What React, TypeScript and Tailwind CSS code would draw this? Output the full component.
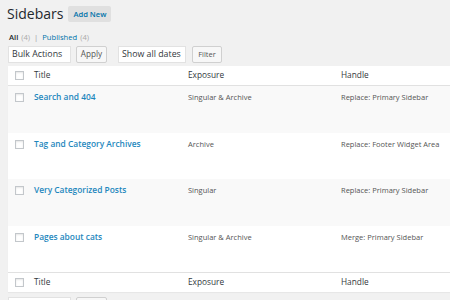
const rows = [
  { title: "Search and 404", exposure: "Singular & Archive", handle: "Replace: Primary Sidebar", h: "h-[47px]", bg: "bg-[#f9f9f9]" },
  { title: "Tag and Category Archives", exposure: "Archive", handle: "Replace: Footer Widget Area", h: "h-[46px]", bg: "bg-white" },
  { title: "Very Categorized Posts", exposure: "Singular", handle: "Replace: Primary Sidebar", h: "h-[47px]", bg: "bg-[#f9f9f9]" },
  { title: "Pages about cats", exposure: "Singular & Archive", handle: "Merge: Primary Sidebar", h: "h-[46px]", bg: "bg-white" },
];

function Checkbox() {
  return (
    <span className="block size-[9px] border border-[#c3c7cb] bg-white shadow-[inset_0_1px_2px_rgba(0,0,0,0.1)]" />
  );
}

function HeadRow({ border }: { border: string }) {
  return (
    <div className={`flex h-[20px] items-center bg-white ${border} border-[#e1e1e1] text-[8.3px] text-[#32373c]`}>
      <div className="w-[26px] pl-[7px]">
        <Checkbox />
      </div>
      <div className="w-[154px]">Title</div>
      <div className="w-[153px]">Exposure</div>
      <div>Handle</div>
    </div>
  );
}

export default function App() {
  return (
    <div className="h-[300px] w-[450px] overflow-hidden whitespace-nowrap bg-[#f1f1f1] font-['Open_Sans',sans-serif]">
      <div className="flex items-center gap-[5px] pl-[7px] pt-[1px]">
        <h1 className="text-[14px] leading-[25px] text-[#23282d]">Sidebars</h1>
        <span className="rounded-[2px] bg-[#e0e0e0] px-[5px] py-[3px] text-[7.6px] font-semibold leading-[10px] text-[#0073aa]">
          Add New
        </span>
      </div>

      <div className="mt-[5px] flex items-center pl-[9px] text-[7.6px] leading-[12px] text-[#aaa]">
        <span className="font-semibold text-[#23282d]">All</span>
        <span className="ml-[3px]">(4)</span>
        <span className="mx-[4px] text-[#999]">|</span>
        <span className="text-[#0073aa]">Published</span>
        <span className="ml-[3px]">(4)</span>
      </div>

      <div className="mt-[3px] flex h-[17px] items-stretch pl-[8px] text-[8.8px] text-[#32373c]">
        <div className="flex w-[63px] items-center bg-white pl-[4px] shadow-[inset_0_0_0_1px_#e2e2e2]">Bulk Actions</div>
        <div className="ml-[5px] flex w-[31px] items-center justify-center rounded-[2px] border border-[#d0d0d0] bg-[#f7f7f7] text-[8.2px] text-[#555]">
          Apply
        </div>
        <div className="ml-[11px] flex w-[68px] items-center bg-white pl-[4px] shadow-[inset_0_0_0_1px_#e2e2e2]">Show all dates</div>
        <div className="ml-[6px] flex w-[30px] items-center justify-center rounded-[2px] border border-[#d0d0d0] bg-[#f7f7f7] text-[7.5px] text-[#555]">
          Filter
        </div>
      </div>

      <div className="ml-[8px] mt-[3px] shadow-[0_1px_1px_rgba(0,0,0,0.04)]">
        <HeadRow border="border-b" />
        {rows.map((r) => (
          <div key={r.title} className={`flex items-start ${r.h} ${r.bg} pt-[4px]`}>
            <div className="w-[26px] pl-[7px] pt-[3px]">
              <Checkbox />
            </div>
            <div className="w-[154px] text-[8.4px] font-semibold leading-[14px] text-[#1e87bd]">{r.title}</div>
            <div className="w-[153px] pt-[1px] text-[7.5px] leading-[13px] text-[#555]">{r.exposure}</div>
            <div className="pt-[1px] text-[7.5px] leading-[13px] text-[#555]">{r.handle}</div>
          </div>
        ))}
        <HeadRow border="border-t" />
      </div>

      <div className="mt-[5px] flex h-[17px] pl-[8px]">
        <div className="w-[63px] bg-white shadow-[inset_0_0_0_1px_#e2e2e2]" />
        <div className="ml-[5px] w-[31px] rounded-[2px] border border-[#d0d0d0] bg-[#f7f7f7]" />
      </div>
    </div>
  );
}
